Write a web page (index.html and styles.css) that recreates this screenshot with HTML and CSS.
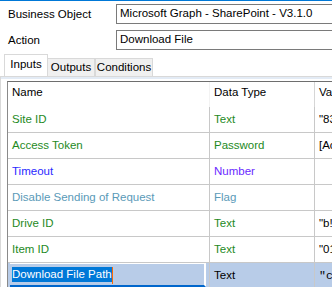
FILE: index.html
```html
<!DOCTYPE html>
<html lang="en">
<head>
  <meta charset="UTF-8" />
  <title>Action Properties</title>
  <link rel="stylesheet" href="styles.css">
</head>
<body>

  <div class="field">
    <span class="label">Business Object</span>
    <div class="combo">Microsoft Graph - SharePoint - V3.1.0</div>
  </div>
  <div class="field">
    <span class="label">Action</span>
    <div class="combo">Download File</div>
  </div>

  <div class="tabs">
    <div class="tab active tab-inputs">Inputs</div>
    <div class="tab tab-outputs">Outputs</div>
    <div class="tab tab-conditions">Conditions</div>
  </div>

  <div class="panel">
    <div class="grid">
      <div class="row head">
        <div class="cell name">Name</div>
        <div class="cell type">Data Type</div>
        <div class="cell value">Value</div>
      </div>
      <div class="row">
        <div class="cell name text-green">Site ID</div>
        <div class="cell type text-green">Text</div>
        <div class="cell value">"83f0</div>
      </div>
      <div class="row">
        <div class="cell name text-green">Access Token</div>
        <div class="cell type text-green">Password</div>
        <div class="cell value">[Access</div>
      </div>
      <div class="row">
        <div class="cell name text-blue">Timeout</div>
        <div class="cell type text-purple">Number</div>
        <div class="cell value"></div>
      </div>
      <div class="row">
        <div class="cell name text-flag">Disable Sending of Request</div>
        <div class="cell type text-flag">Flag</div>
        <div class="cell value"></div>
      </div>
      <div class="row">
        <div class="cell name text-green">Drive ID</div>
        <div class="cell type text-green">Text</div>
        <div class="cell value">"b!x</div>
      </div>
      <div class="row">
        <div class="cell name text-green">Item ID</div>
        <div class="cell type text-green">Text</div>
        <div class="cell value">"01A</div>
      </div>
      <div class="row selected">
        <div class="cell name">
          <div class="editor"><span class="sel">Download File Path</span><span class="caret"></span></div>
        </div>
        <div class="cell type">Text</div>
        <div class="cell value mono">"c:\</div>
      </div>
    </div>
  </div>

</body>
</html>
```

FILE: styles.css
```css
body {
  margin: 0;
  font-family: 'Liberation Sans', Arial, sans-serif;
  font-size: 11.5px;
  color: #000000;
  background: #ffffff;
  width: 332px;
  height: 287px;
  overflow: hidden;
  border-top: 1px solid #0078d7;
  box-sizing: border-box;
}

.field {
  display: flex;
  align-items: center;
  height: 20px;
  margin-top: 3px;
}

.field + .field {
  margin-top: 6px;
}

.label {
  width: 108px;
  padding-left: 8px;
  flex-shrink: 0;
}

.combo {
  flex-shrink: 0;
  width: 240px;
  height: 20px;
  box-sizing: border-box;
  border: 1px solid #7a7a7a;
  padding: 2px 0 0 3px;
  white-space: nowrap;
}

.tabs {
  display: flex;
  align-items: flex-end;
  margin-top: 4px;
  padding-left: 4px;
  height: 22px;
}

.tab {
  height: 18px;
  box-sizing: border-box;
  border: 1px solid #d9d9d9;
  border-bottom: none;
  background: #f0f0f0;
  padding-top: 2px;
  text-align: center;
}

.tab-inputs {
  width: 44px;
}

.tab-outputs {
  width: 48px;
}

.tab-conditions {
  width: 58px;
}

.tab.active {
  height: 22px;
  background: #ffffff;
  padding-top: 3px;
  margin-right: -1px;
  position: relative;
  z-index: 1;
}

.panel {
  border-top: 1px solid #d9d9d9;
  border-left: 1px solid #d9d9d9;
  padding: 4px 0 0 6px;
  box-shadow: inset 0 2px 0 #e3ebf5;
}

.grid {
  border-top: 1px solid #6e6e6e;
  border-left: 1px solid #8a8a8a;
}

.row {
  display: flex;
  height: 26px;
  box-sizing: border-box;
  border-bottom: 1px solid #c8c8c8;
}

.row.head {
  height: 25px;
  border-bottom: none;
}

.cell {
  box-sizing: border-box;
  padding: 6px 0 0 4px;
  white-space: nowrap;
  overflow: hidden;
  flex-shrink: 0;
}

.head .cell {
  padding-top: 4px;
}

.name {
  width: 201px;
}

.type {
  width: 105px;
  border-left: 1px solid #c8c8c8;
}

.value {
  width: 40px;
  border-left: 1px solid #c8c8c8;
}

.head .type {
  border-left-color: #f3f3f3;
}

.head .value {
  border-left-color: #d6d6d6;
}

.text-green {
  color: #1e8a1e;
}

.text-blue {
  color: #2a2aff;
}

.text-purple {
  color: #6a2aff;
}

.text-flag {
  color: #5a9ab8;
}

.row.selected {
  background: #b8cce8;
  border-bottom: none;
}

.row.selected .cell.name {
  padding: 0 0 0 2px;
}

.editor {
  height: 24px;
  width: 196px;
  box-sizing: border-box;
  border-right: 2px solid #ffffff;
  border-top: 1px solid #ffffff;
  border-bottom: 2px solid #0066cc;
  padding: 3px 0 0 2px;
  display: flex;
  align-items: flex-start;
}

.sel {
  background: #0078d7;
  color: #ffffff;
  padding: 1px 0 2px;
}

.caret {
  width: 1px;
  height: 17px;
  background: #ff6a00;
}

.mono {
  font-family: 'Liberation Mono', monospace;
}
```
